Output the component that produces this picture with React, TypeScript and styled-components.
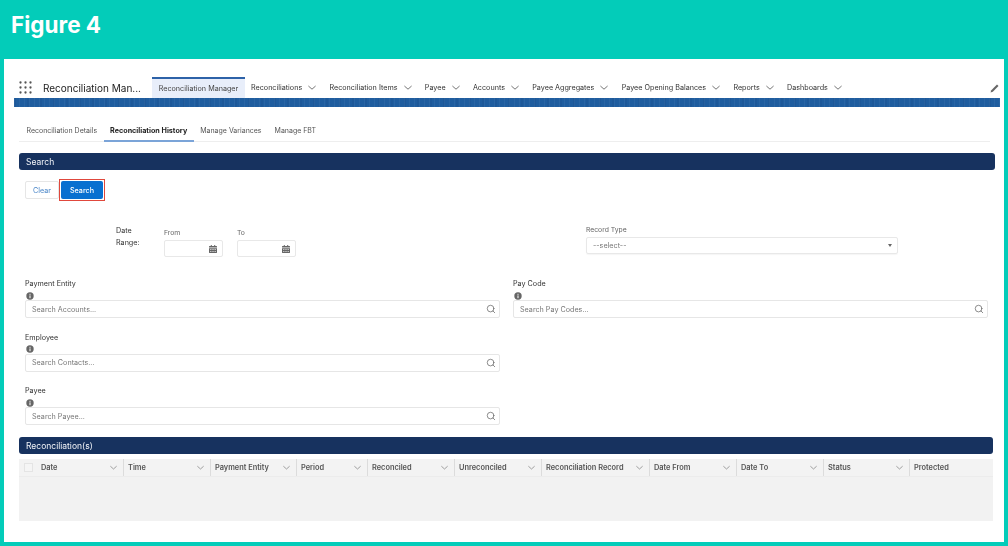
import styled, { createGlobalStyle } from "styled-components";
import { Search as SearchIcon } from "lucide-react";

const navItems = [
  "Reconciliations",
  "Reconciliation Items",
  "Payee",
  "Accounts",
  "Payee Aggregates",
  "Payee Opening Balances",
  "Reports",
  "Dashboards",
];

const subTabs = [
  { label: "Reconciliation Details" },
  { label: "Reconciliation History", active: true },
  { label: "Manage Variances" },
  { label: "Manage FBT" },
];

const columns = [
  { label: "Time", width: 87 },
  { label: "Payment Entity", width: 86 },
  { label: "Period", width: 71 },
  { label: "Reconciled", width: 87 },
  { label: "Unreconciled", width: 87 },
  { label: "Reconciliation Record", width: 108 },
  { label: "Date From", width: 87 },
  { label: "Date To", width: 87 },
  { label: "Status", width: 86 },
];

const AppsIcon = () => (
  <svg width="13" height="13" viewBox="0 0 13 13" fill="#555">
    {[1.5, 6.5, 11.5].map((y) =>
      [1.5, 6.5, 11.5].map((x) => <circle key={`${x}-${y}`} cx={x} cy={y} r="1.15" />)
    )}
  </svg>
);

const PencilIcon = () => (
  <svg width="9" height="9" viewBox="0 0 9 9" fill="#666">
    <path d="M7 .5 8.5 2 2.8 7.7.5 8.5 1.3 6.2Z" />
  </svg>
);

const CalendarIcon = () => (
  <svg width="8" height="8" viewBox="0 0 8 8" fill="#666">
    <path d="M1.8 0h1v1h2.4V0h1v1H7.6a.4.4 0 0 1 .4.4V2.6H0V1.4A.4.4 0 0 1 .4 1h1.4ZM0 3.2h8v4.4a.4.4 0 0 1-.4.4H.4a.4.4 0 0 1-.4-.4Zm1.2 1v.9h1.2v-.9Zm2.2 0v.9h1.2v-.9Zm2.2 0v.9h1.2v-.9Zm-4.4 1.7v.9h1.2v-.9Zm2.2 0v.9h1.2v-.9Zm2.2 0v.9h1.2v-.9Z" />
  </svg>
);

const InfoIcon = () => (
  <svg width="8" height="8" viewBox="0 0 8 8">
    <circle cx="4" cy="4" r="3.7" fill="#666" />
    <rect x="3.5" y="3.4" width="1" height="2.8" fill="#fff" />
    <rect x="3.5" y="1.8" width="1" height="1" fill="#fff" />
  </svg>
);

const ShallowChevron = ({ width, color }: { width: number; color: string }) => (
  <svg width={width} height="5" viewBox="0 0 8 5" fill="none" stroke={color} strokeWidth="0.9">
    <path d="M.4 1 4 4.2 7.6 1" />
  </svg>
);

const LookupField = ({ label, placeholder }: { label: string; placeholder: string }) => (
  <Field>
    <FieldLabel>{label}</FieldLabel>
    <InfoRow>
      <InfoIcon />
    </InfoRow>
    <LookupBox>
      <Placeholder>{placeholder}</Placeholder>
      <SearchIcon size={10} color="#666" strokeWidth={1.8} />
    </LookupBox>
  </Field>
);

const DateInput = ({ label }: { label: string }) => (
  <DateField>
    <SmallLabel>{label}</SmallLabel>
    <DateBox>
      <CalendarIcon />
    </DateBox>
  </DateField>
);

export default function App() {
  return (
    <>
      <GlobalStyle />
      <Page>
        <Banner>Figure 4</Banner>
        <Panel>
          <TopNav>
            <AppsIcon />
            <AppName>Reconciliation Man...</AppName>
            <ActiveNavTab>Reconciliation Manager</ActiveNavTab>
            <NavList>
              {navItems.map((item) => (
                <NavItem key={item}>
                  {item}
                  <ShallowChevron width={8} color="#666" />
                </NavItem>
              ))}
            </NavList>
            <EditButton>
              <PencilIcon />
            </EditButton>
          </TopNav>
          <BlueBar />
          <SubTabs>
            {subTabs.map((tab) => (
              <SubTab key={tab.label} $active={tab.active}>
                {tab.label}
              </SubTab>
            ))}
          </SubTabs>
          <SearchHeader>Search</SearchHeader>
          <ButtonRow>
            <ClearButton>Clear</ClearButton>
            <SearchHighlight>
              <SearchButton>Search</SearchButton>
            </SearchHighlight>
          </ButtonRow>
          <DateRow>
            <DateRangeLabel>
              Date
              <br />
              Range:
            </DateRangeLabel>
            <DateInput label="From" />
            <DateInput label="To" />
            <RecordField>
              <SmallLabel>Record Type</SmallLabel>
              <SelectBox>
                <Placeholder>--select--</Placeholder>
                <Caret />
              </SelectBox>
            </RecordField>
          </DateRow>
          <LookupGrid>
            <LookupField label="Payment Entity" placeholder="Search Accounts..." />
            <LookupField label="Pay Code" placeholder="Search Pay Codes..." />
            <LookupField label="Employee" placeholder="Search Contacts..." />
            <EmptyCell />
            <LookupField label="Payee" placeholder="Search Payee..." />
          </LookupGrid>
          <ResultsHeader>Reconciliation(s)</ResultsHeader>
          <Table>
            <HeaderRow>
              <FirstHeaderCell>
                <Checkbox />
                <HeaderLabel>Date</HeaderLabel>
                <Chevron>
                  <ShallowChevron width={7} color="#888" />
                </Chevron>
              </FirstHeaderCell>
              {columns.map((col) => (
                <HeaderCell key={col.label} $width={col.width}>
                  <HeaderLabel>{col.label}</HeaderLabel>
                  <Chevron>
                    <ShallowChevron width={7} color="#888" />
                  </Chevron>
                </HeaderCell>
              ))}
              <HeaderCell $width={84}>
                <HeaderLabel>Protected</HeaderLabel>
              </HeaderCell>
            </HeaderRow>
            <TableBody />
          </Table>
        </Panel>
      </Page>
    </>
  );
}

const GlobalStyle = createGlobalStyle`
  html, body {
    margin: 0;
    padding: 0;
    overflow: hidden;
    background: #03ccb9;
  }
  * {
    box-sizing: border-box;
  }
`;

const Page = styled.div`
  width: 1008px;
  height: 546px;
  display: flex;
  flex-direction: column;
  background: #03ccb9;
  font-family: Inter, "Liberation Sans", sans-serif;
  overflow: hidden;
`;

const Banner = styled.div`
  height: 59px;
  padding: 12px 0 0 11px;
  font-size: 22.5px;
  line-height: 26px;
  font-weight: 700;
  color: #fff;
`;

const Panel = styled.div`
  width: 1000px;
  height: 483px;
  margin-left: 4px;
  padding-top: 18px;
  background: #fff;
  display: flex;
  flex-direction: column;
  filter: blur(0.4px);
`;

const TopNav = styled.div`
  height: 21px;
  padding: 0 5px 0 15px;
  display: flex;
  align-items: center;
`;

const AppName = styled.div`
  width: 109px;
  margin-left: 11px;
  font-size: 10px;
  color: #222;
  white-space: nowrap;
`;

const ActiveNavTab = styled.div`
  width: 93px;
  height: 21px;
  display: flex;
  align-items: center;
  justify-content: center;
  background: #e8eefa;
  border-top: 2px solid #2d62a8;
  font-size: 7.2px;
  color: #444;
  white-space: nowrap;
`;

const NavList = styled.div`
  display: flex;
  align-items: center;
  gap: 13.3px;
  margin-left: 6px;
`;

const NavItem = styled.div`
  display: flex;
  align-items: center;
  gap: 6px;
  font-size: 7.2px;
  color: #333;
  white-space: nowrap;
`;

const EditButton = styled.div`
  margin-left: auto;
  display: flex;
  padding-top: 2px;
`;

const BlueBar = styled.div`
  height: 9px;
  margin: 0 4px 0 10px;
  background-color: #1f5d9f;
  background-image: repeating-linear-gradient(
      90deg,
      rgba(255, 255, 255, 0.05) 0 1px,
      transparent 1px 5px
    ),
    repeating-linear-gradient(90deg, rgba(0, 0, 40, 0.05) 0 2px, transparent 2px 13px);
`;

const SubTabs = styled.div`
  height: 22px;
  margin: 13px 14px 0 15px;
  padding-left: 1px;
  display: flex;
  border-bottom: 1px solid #eeeeee;
`;

const SubTab = styled.div<{ $active?: boolean }>`
  height: 22px;
  padding: 0 6.5px;
  display: flex;
  align-items: center;
  font-size: ${(p) => (p.$active ? 7.2 : 7)}px;
  font-weight: ${(p) => (p.$active ? 700 : 400)};
  color: ${(p) => (p.$active ? "#222" : "#555")};
  border-bottom: 2px solid ${(p) => (p.$active ? "#7ba4d8" : "transparent")};
  white-space: nowrap;
`;

const SectionBar = styled.div`
  height: 17px;
  margin-left: 15px;
  padding-left: 7px;
  display: flex;
  align-items: center;
  background: #17325f;
  border-radius: 3px;
  font-size: 8.5px;
  color: #f2f4f8;
`;

const SearchHeader = styled(SectionBar)`
  margin-top: 11px;
  margin-right: 9px;
`;

const ResultsHeader = styled(SectionBar)`
  margin-top: 12px;
  margin-right: 11px;
`;

const ButtonRow = styled.div`
  margin: 9px 0 0 21px;
  display: flex;
  align-items: center;
`;

const ClearButton = styled.div`
  width: 34px;
  height: 18px;
  display: flex;
  align-items: center;
  justify-content: center;
  background: #fff;
  border: 1px solid #e6e6e6;
  border-radius: 2px;
  font-size: 7.2px;
  color: #4a86c8;
`;

const SearchHighlight = styled.div`
  padding: 1px;
  border: 1px solid #e0483c;
`;

const SearchButton = styled.div`
  width: 42px;
  height: 18px;
  display: flex;
  align-items: center;
  justify-content: center;
  background: #0870d0;
  border-radius: 2px;
  font-size: 7.2px;
  font-weight: 500;
  color: #fff;
`;

const DateRow = styled.div`
  margin: 23px 0 0 112px;
  display: flex;
  align-items: flex-start;
`;

const DateRangeLabel = styled.div`
  width: 48px;
  padding-top: 1px;
  font-size: 7.2px;
  line-height: 12px;
  color: #333;
`;

const DateField = styled.div`
  width: 59px;
  margin-right: 14px;
  padding-top: 4px;
  display: flex;
  flex-direction: column;
`;

const SmallLabel = styled.div`
  height: 9px;
  margin-bottom: 3px;
  font-size: 6.8px;
  line-height: 9px;
  color: #666;
`;

const DateBox = styled.div`
  height: 17px;
  padding-right: 5px;
  display: flex;
  align-items: center;
  justify-content: flex-end;
  border: 1px solid #e8e8e8;
  border-radius: 2px;
`;

const RecordField = styled.div`
  width: 312px;
  margin-left: 276px;
  display: flex;
  flex-direction: column;
  padding-top: 1px;
`;

const SelectBox = styled.div`
  height: 17px;
  padding: 0 5px 0 6px;
  display: flex;
  align-items: center;
  justify-content: space-between;
  border: 1px solid #e8e8e8;
  border-radius: 2px;
  box-shadow: 0 1px 1px rgba(0, 0, 0, 0.04);
`;

const Caret = styled.div`
  width: 0;
  height: 0;
  border-left: 2.5px solid transparent;
  border-right: 2.5px solid transparent;
  border-top: 3.5px solid #666;
`;

const Placeholder = styled.span`
  font-size: 7.2px;
  color: #777;
`;

const LookupGrid = styled.div`
  margin: 22px 16px 0 21px;
  display: grid;
  grid-template-columns: 475px 475px;
  column-gap: 13px;
  row-gap: 14.5px;
`;

const EmptyCell = styled.div``;

const Field = styled.div`
  display: flex;
  flex-direction: column;
`;

const FieldLabel = styled.div`
  height: 12px;
  font-size: 7.2px;
  line-height: 10px;
  color: #333;
`;

const InfoRow = styled.div`
  height: 9px;
  display: flex;
  align-items: center;
  padding-left: 1px;
`;

const LookupBox = styled.div`
  height: 18px;
  padding: 0 3px 0 6px;
  display: flex;
  align-items: center;
  justify-content: space-between;
  border: 1px solid #e6e6e6;
  border-radius: 2px;
`;

const Table = styled.div`
  margin: 5px 11px 0 15px;
  display: flex;
  flex-direction: column;
`;

const HeaderRow = styled.div`
  height: 18px;
  display: flex;
  background: #f3f3f3;
  border-bottom: 1px solid #ececec;
`;

const HeaderCell = styled.div<{ $width: number }>`
  width: ${(p) => p.$width}px;
  padding: 0 6px 0 4px;
  display: flex;
  align-items: center;
  justify-content: space-between;
  border-left: 1px solid #dcdcdc;
`;

const FirstHeaderCell = styled.div`
  width: 104px;
  padding: 0 6px 0 5px;
  display: flex;
  align-items: center;
`;

const Checkbox = styled.div`
  width: 9px;
  height: 9px;
  margin-right: 8px;
  border: 1px solid #e4e4e4;
  background: #f5f5f5;
`;

const HeaderLabel = styled.span`
  font-size: 7.4px;
  font-weight: 600;
  color: #555;
  white-space: nowrap;
`;

const Chevron = styled.span`
  margin-left: auto;
  display: flex;
`;

const TableBody = styled.div`
  height: 44px;
  background: #f2f2f2;
`;
